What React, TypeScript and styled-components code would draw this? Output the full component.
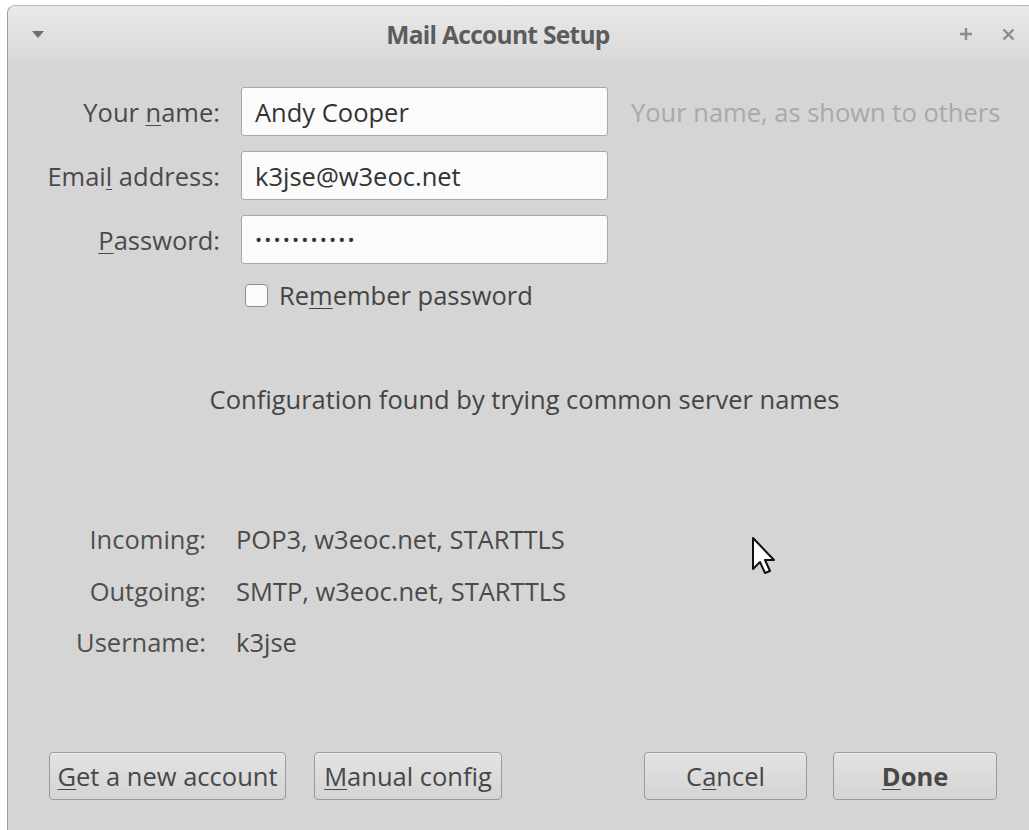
import React from 'react';
import styled, { createGlobalStyle } from 'styled-components';

const GlobalStyle = createGlobalStyle`
  html, body {
    margin: 0;
    padding: 0;
    background: #ffffff;
    overflow: hidden;
  }
  body {
    font-family: "Open Sans", "DejaVu Sans", sans-serif;
    font-size: 25.5px;
    color: #444444;
  }
`;

const Screen = styled.div`
  width: 1029px;
  height: 830px;
  padding: 5px 0 0 7px;
  box-sizing: border-box;
  overflow: hidden;
  position: relative;
`;

const Window = styled.div`
  width: 1022px;
  height: 825px;
  display: flex;
  flex-direction: column;
  background: #d5d5d5;
  border-top: 1px solid #b9b9b9;
  border-left: 1px solid #9d9d9d;
  border-top-left-radius: 8px;
  box-sizing: border-box;
`;

const TitleBar = styled.div`
  height: 56px;
  display: flex;
  align-items: center;
  background: linear-gradient(#e9e9e9, #d8d8d8);
  border-top-left-radius: 7px;
  padding: 0 14px 0 24px;
`;

const MenuArrow = styled.div`
  width: 0;
  height: 0;
  border-left: 6px solid transparent;
  border-right: 6px solid transparent;
  border-top: 7px solid #6e6e6e;
`;

const Title = styled.div`
  flex: 1;
  text-align: center;
  font-weight: 700;
  font-size: 24.5px;
  color: #5c5c5c;
  letter-spacing: -0.7px;
  padding-right: 7px;
`;

const TitleButtons = styled.div`
  display: flex;
  align-items: center;
  gap: 29px;
`;

const Body = styled.div`
  flex: 1;
  display: flex;
  flex-direction: column;
`;

const Form = styled.div`
  display: grid;
  grid-template-columns: 212px 367px auto;
  column-gap: 21px;
  row-gap: 15px;
  align-items: center;
  margin-top: 25px;
`;

const FieldLabel = styled.label`
  text-align: right;
  color: #4a4a4a;
  white-space: nowrap;
`;

const Key = styled.span`
  text-decoration: underline;
  text-underline-offset: 3px;
  text-decoration-thickness: 1px;
`;

const TextBox = styled.div<{ $dots?: boolean }>`
  height: 49px;
  box-sizing: border-box;
  display: flex;
  align-items: center;
  padding-left: 13px;
  background: #fbfbfb;
  border: 1px solid #a9a9a9;
  border-radius: 3px;
  color: #333333;
  font-size: ${(p) => (p.$dots ? '19px' : '25.5px')};
  letter-spacing: ${(p) => (p.$dots ? '2.1px' : '0')};
  white-space: nowrap;
`;

const Hint = styled.div`
  color: #a9a9a9;
  margin-left: 2px;
  white-space: nowrap;
`;

const CheckRow = styled.label`
  display: flex;
  align-items: center;
  gap: 11px;
  margin: 14px 0 0 237px;
  color: #444444;
`;

const Box = styled.span`
  width: 23px;
  height: 23px;
  box-sizing: border-box;
  border: 1px solid #8e8e8e;
  border-radius: 4px;
  background: #fbfbfb;
`;

const Status = styled.div`
  text-align: center;
  margin-top: 70px;
  padding-left: 12px;
  color: #444444;
  white-space: nowrap;
`;

const Details = styled.div`
  display: grid;
  grid-template-columns: 198px auto;
  column-gap: 30px;
  row-gap: 17.5px;
  margin-top: 106px;
  justify-content: start;
`;

const DetailKey = styled.div`
  text-align: right;
  color: #4f4f4f;
  white-space: nowrap;
`;

const DetailValue = styled.div`
  color: #4a4a4a;
  white-space: nowrap;
`;

const Buttons = styled.div`
  margin-top: auto;
  display: flex;
  align-items: center;
  padding: 0 32px 30px 41px;
`;

const Group = styled.div<{ $gap: number }>`
  display: flex;
  gap: ${(p) => p.$gap}px;
`;

const Spacer = styled.div`
  flex: 1;
`;

const Button = styled.button<{ $width: number; $primary?: boolean }>`
  width: ${(p) => p.$width}px;
  height: 48px;
  font-family: inherit;
  font-size: 25.5px;
  font-weight: ${(p) => (p.$primary ? 700 : 400)};
  color: #474747;
  background: linear-gradient(#e3e3e3, #d4d4d4);
  border: 1px solid #9b9b9b;
  border-radius: 4px;
  box-shadow: inset 0 1px 0 #f0f0f0;
  padding: 0;
  white-space: nowrap;
`;

const Pointer = styled.svg`
  position: absolute;
  left: 751px;
  top: 536px;
`;

export default function App() {
  return (
    <Screen>
      <GlobalStyle />
      <Window>
        <TitleBar>
          <MenuArrow />
          <Title>Mail Account Setup</Title>
          <TitleButtons>
            <svg width="14" height="14" viewBox="0 0 14 14">
              <path d="M7 1 V13 M1 7 H13" stroke="#8c8c8c" strokeWidth="2.4" />
            </svg>
            <svg width="13" height="13" viewBox="0 0 13 13">
              <path d="M1.5 1.5 L11.5 11.5 M11.5 1.5 L1.5 11.5" stroke="#8c8c8c" strokeWidth="2.4" />
            </svg>
          </TitleButtons>
        </TitleBar>
        <Body>
          <Form>
            <FieldLabel>
              Your <Key>n</Key>ame:
            </FieldLabel>
            <TextBox>Andy Cooper</TextBox>
            <Hint>Your name, as shown to others</Hint>

            <FieldLabel>
              Emai<Key>l</Key> address:
            </FieldLabel>
            <TextBox>k3jse@w3eoc.net</TextBox>
            <span />

            <FieldLabel>
              <Key>P</Key>assword:
            </FieldLabel>
            <TextBox $dots>•••••••••••</TextBox>
            <span />
          </Form>

          <CheckRow>
            <Box />
            <span>
              Re<Key>m</Key>ember password
            </span>
          </CheckRow>

          <Status>Configuration found by trying common server names</Status>

          <Details>
            <DetailKey>Incoming:</DetailKey>
            <DetailValue>POP3, w3eoc.net, STARTTLS</DetailValue>
            <DetailKey>Outgoing:</DetailKey>
            <DetailValue>SMTP, w3eoc.net, STARTTLS</DetailValue>
            <DetailKey>Username:</DetailKey>
            <DetailValue>k3jse</DetailValue>
          </Details>

          <Buttons>
            <Group $gap={28}>
              <Button $width={237}>
                <Key>G</Key>et a new account
              </Button>
              <Button $width={188}>
                <Key>M</Key>anual config
              </Button>
            </Group>
            <Spacer />
            <Group $gap={26}>
              <Button $width={163}>
                C<Key>a</Key>ncel
              </Button>
              <Button $width={164} $primary>
                <Key>D</Key>one
              </Button>
            </Group>
          </Buttons>
        </Body>
      </Window>
      <Pointer width="26" height="40" viewBox="0 0 26 40">
        <path
          d="M2 2 L2 33 L9 26 L14 37 L19 35 L14 24 L23 24 Z"
          fill="#ffffff"
          stroke="#111111"
          strokeWidth="2"
          strokeLinejoin="round"
        />
      </Pointer>
    </Screen>
  );
}
